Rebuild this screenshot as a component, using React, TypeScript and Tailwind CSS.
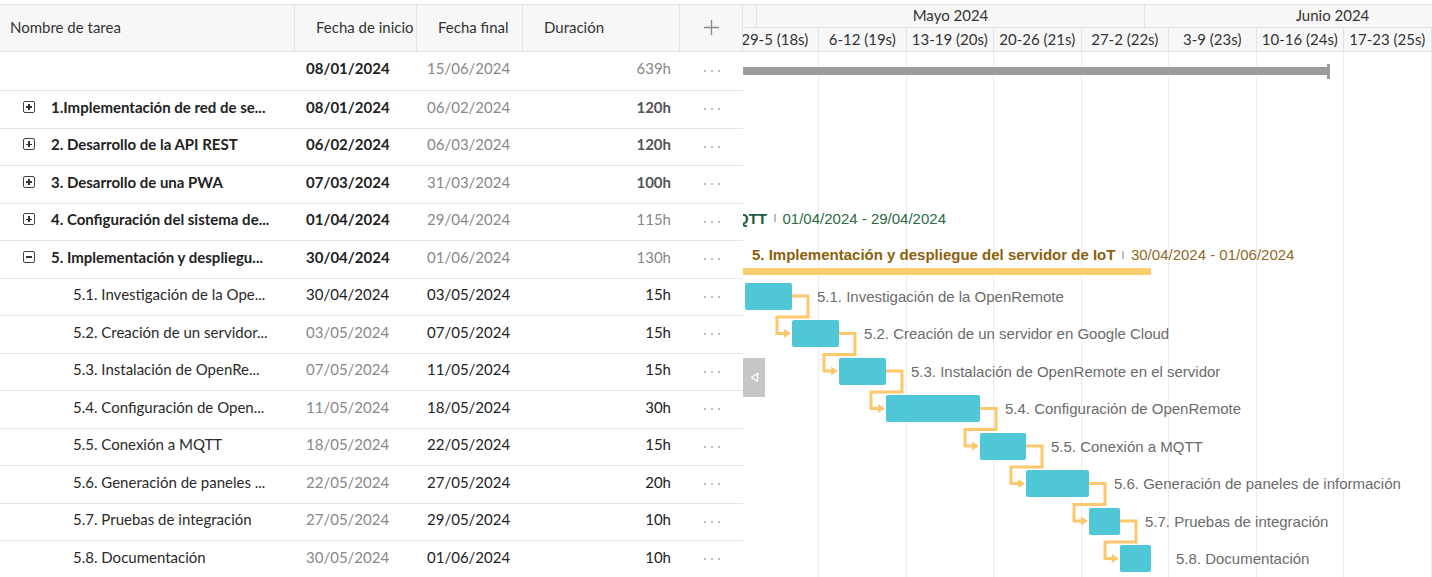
import React from "react";

type GridRow = {
  name: string;
  start: string;
  end: string;
  dur: string;
  level: 0 | 1 | 2;
  icon?: "plus" | "minus";
  startDark?: boolean;
  durBold?: boolean;
};

const gridRows: GridRow[] = [
  { name: "", start: "08/01/2024", end: "15/06/2024", dur: "639h", level: 0 },
  { name: "1.Implementación de red de se...", start: "08/01/2024", end: "06/02/2024", dur: "120h", level: 1, icon: "plus", durBold: true },
  { name: "2. Desarrollo de la API REST", start: "06/02/2024", end: "06/03/2024", dur: "120h", level: 1, icon: "plus", durBold: true },
  { name: "3. Desarrollo de una PWA", start: "07/03/2024", end: "31/03/2024", dur: "100h", level: 1, icon: "plus", durBold: true },
  { name: "4. Configuración del sistema de...", start: "01/04/2024", end: "29/04/2024", dur: "115h", level: 1, icon: "plus" },
  { name: "5. Implementación y despliegu...", start: "30/04/2024", end: "01/06/2024", dur: "130h", level: 1, icon: "minus" },
  { name: "5.1. Investigación de la Ope...", start: "30/04/2024", end: "03/05/2024", dur: "15h", level: 2, startDark: true },
  { name: "5.2. Creación de un servidor...", start: "03/05/2024", end: "07/05/2024", dur: "15h", level: 2 },
  { name: "5.3. Instalación de OpenRe...", start: "07/05/2024", end: "11/05/2024", dur: "15h", level: 2 },
  { name: "5.4. Configuración de Open...", start: "11/05/2024", end: "18/05/2024", dur: "30h", level: 2 },
  { name: "5.5. Conexión a MQTT", start: "18/05/2024", end: "22/05/2024", dur: "15h", level: 2 },
  { name: "5.6. Generación de paneles ...", start: "22/05/2024", end: "27/05/2024", dur: "20h", level: 2 },
  { name: "5.7. Pruebas de integración", start: "27/05/2024", end: "29/05/2024", dur: "10h", level: 2 },
  { name: "5.8. Documentación", start: "30/05/2024", end: "01/06/2024", dur: "10h", level: 2 },
];

// bar positions in px, relative to the left edge of the gantt pane
const tasks = [
  { x0: 2, x1: 49, label: "5.1. Investigación de la OpenRemote" },
  { x0: 49, x1: 96, label: "5.2. Creación de un servidor en Google Cloud" },
  { x0: 96, x1: 143, label: "5.3. Instalación de OpenRemote en el servidor" },
  { x0: 143, x1: 237, label: "5.4. Configuración de OpenRemote" },
  { x0: 237, x1: 283, label: "5.5. Conexión a MQTT" },
  { x0: 283, x1: 346, label: "5.6. Generación de paneles de información" },
  { x0: 346, x1: 377, label: "5.7. Pruebas de integración" },
  { x0: 377, x1: 408, label: "5.8. Documentación" },
];

const weeks = ["29-5 (18s)", "6-12 (19s)", "13-19 (20s)", "20-26 (21s)", "27-2 (22s)", "3-9 (23s)", "10-16 (24s)", "17-23 (25s)"];

const ROW_H = 37.5;
const FIRST_H = 39;
const rowTop = (i: number) => (i === 0 ? 0 : FIRST_H + (i - 1) * ROW_H);

const Expander = ({ kind }: { kind: "plus" | "minus" }) => (
  <span className="relative mr-[16px] ml-[23px] flex h-[12px] w-[12px] shrink-0 items-center justify-center rounded-[2px] border border-[#444]">
    <span className="h-[1.5px] w-[6px] bg-[#333]" />
    {kind === "plus" && <span className="absolute h-[6px] w-[1.5px] bg-[#333]" />}
  </span>
);

const Dots = () => (
  <div className="flex gap-[5px]">
    <span className="h-[2px] w-[2px] rounded-full bg-[#a8a8a8]" />
    <span className="h-[2px] w-[2px] rounded-full bg-[#a8a8a8]" />
    <span className="h-[2px] w-[2px] rounded-full bg-[#a8a8a8]" />
  </div>
);

const Grid = () => (
  <div className="w-[743px] shrink-0 font-['Lato',sans-serif] text-[15px] text-[#222]">
    <div className="flex h-[47px] border-b border-[#e3e3e3] bg-[#f7f7f7] text-[#333]">
      <div className="flex w-[295px] items-center border-r border-[#e3e3e3] pb-[2px] pl-[10px]">Nombre de tarea</div>
      <div className="flex w-[122px] items-center border-r border-[#e3e3e3] pb-[2px] pl-[21px]">Fecha de inicio</div>
      <div className="flex w-[106px] items-center border-r border-[#e3e3e3] pb-[2px] pl-[21px]">Fecha final</div>
      <div className="flex w-[157px] items-center border-r border-[#e3e3e3] pb-[2px] pl-[21px]">Duración</div>
      <div className="flex w-[63px] items-center justify-center border-r border-[#e3e3e3] pb-[2px]">
        <svg width="17" height="17" viewBox="0 0 17 17">
          <path d="M8.5 1v15M1 8.5h15" stroke="#8a8a8a" strokeWidth="1.3" />
        </svg>
      </div>
    </div>
    {gridRows.map((r, i) => {
      const bold = r.level < 2;
      return (
        <div
          key={i}
          className={`flex items-center border-b border-[#e6e6e6] pb-[5px] ${i === 0 ? "h-[39px]" : "h-[37.5px]"}`}
        >
          <div className={`flex w-[295px] items-center whitespace-nowrap ${bold ? "font-bold" : "pl-[73px] text-[#2a2a2a]"}`}>
            {r.icon && <Expander kind={r.icon} />}
            {r.name}
          </div>
          <div className={`w-[122px] pl-[11px] ${bold ? "font-bold text-[#222]" : r.startDark ? "text-[#222]" : "text-[#888]"}`}>
            {r.start}
          </div>
          <div className={`w-[106px] pl-[10px] ${bold ? "text-[#888]" : "text-[#222]"}`}>{r.end}</div>
          <div
            className={`w-[157px] pr-[9px] text-right ${r.level === 2 ? "text-[#222]" : r.durBold ? "font-bold text-[#555]" : "text-[#888]"}`}
          >
            {r.dur}
          </div>
          <div className="flex w-[63px] justify-center pt-[5px]">
            <Dots />
          </div>
        </div>
      );
    })}
  </div>
);

const Sep = () => <span className="mx-[7px] inline-block h-[8px] w-[1.5px] bg-[#bdbdbd]" />;

const Connectors = () => {
  const parts: React.ReactNode[] = [];
  tasks.forEach((t, k) => {
    if (k === tasks.length - 1) return;
    const n = tasks[k + 1];
    const i = 6 + k;
    const cy = rowTop(i) + ROW_H / 2 - 1.25;
    const ny = rowTop(i + 1) + ROW_H / 2 - 1.25;
    const my = rowTop(i) + ROW_H + 1;
    const rx = t.x1 + 16;
    const lx = n.x0 - 15;
    parts.push(
      <path
        key={`p${k}`}
        d={`M${t.x1} ${cy}H${rx}V${my}H${lx}V${ny}H${n.x0 - 7}`}
        fill="none"
        stroke="#fcc86c"
        strokeWidth="3"
      />,
      <polygon key={`a${k}`} points={`${n.x0 - 8},${ny - 4.5} ${n.x0 - 1},${ny} ${n.x0 - 8},${ny + 4.5}`} fill="#fcc86c" />
    );
  });
  return (
    <svg className="pointer-events-none absolute left-0 top-0" width="689" height="526">
      {parts}
    </svg>
  );
};

const Gantt = () => (
  <div className="relative min-w-0 flex-1 overflow-hidden font-['Lato',sans-serif] text-[15px] text-[#333]">
    <div className="h-[47px] border-b border-[#e3e3e3] bg-[#f7f7f7]">
      <div className="flex h-[23px] border-b border-[#e3e3e3]">
        <div className="w-[14px] shrink-0 border-r border-[#e3e3e3]" />
        <div className="flex w-[388px] shrink-0 items-center justify-center border-r border-[#e3e3e3] pb-[2px]">Mayo 2024</div>
        <div className="flex w-[375px] shrink-0 items-center justify-center pb-[2px]">Junio 2024</div>
      </div>
      <div className="-ml-[11.5px] flex h-[23px]">
        {weeks.map((w) => (
          <div key={w} className="flex w-[87.5px] shrink-0 items-center justify-center whitespace-nowrap border-r border-[#e3e3e3] pb-[1px]">
            {w}
          </div>
        ))}
      </div>
    </div>

    <div className="relative h-[526px]">
      <div className="absolute inset-0 -ml-[11.5px] flex">
        {weeks.map((w) => (
          <div key={w} className="h-full w-[87.5px] shrink-0 border-r border-[#ececec]" />
        ))}
      </div>

      <div className="relative font-['Liberation_Sans',Arial,sans-serif] text-[15px]">
        <div className="flex h-[39px] items-start">
          <div className="mt-[15px] h-[8px] w-[584px] bg-[#9c9c9c]" />
          <div className="mt-[12px] h-[15px] w-[3px] bg-[#9c9c9c]" />
        </div>
        <div className="h-[37.5px]" />
        <div className="h-[37.5px]" />
        <div className="h-[37.5px]" />
        <div className="flex h-[37.5px] items-start">
          <div className="mt-[4px] flex h-[21px] items-center whitespace-nowrap leading-[21px]">
            <div className="-ml-[16px] flex w-[40px] justify-end font-bold text-[#1d5a39]">MQTT</div>
            <Sep />
            <span className="text-[#2e6a45]">01/04/2024 - 29/04/2024</span>
          </div>
        </div>
        <div className="flex h-[37.5px] flex-col">
          <div className="mt-[3px] flex h-[21px] items-center whitespace-nowrap pl-[9px] leading-[21px]">
            <span className="font-bold text-[#8d5f0c]">5. Implementación y despliegue del servidor de IoT</span>
            <Sep />
            <span className="text-[#8f6a26]">30/04/2024 - 01/06/2024</span>
          </div>
          <div className="mt-[3px] h-[7px] w-[408px] bg-[#fbcd6e]" />
        </div>
        {tasks.map((t) => (
          <div key={t.label} className="flex h-[37.5px] items-center whitespace-nowrap">
            <div
              className="mb-[2.5px] h-[27px] shrink-0 rounded-[2px] bg-[#50c7d6]"
              style={{ marginLeft: t.x0, width: t.x1 - t.x0 }}
            />
            <span className="mb-[1px] ml-[25px] text-[#6b6b6b]">{t.label}</span>
          </div>
        ))}
      </div>

      <Connectors />

      <div className="absolute left-0 top-[306px] flex h-[39px] w-[22px] items-center justify-center bg-[#c6c6c6]">
        <svg width="9" height="11" viewBox="0 0 9 11">
          <polygon points="7.5,1.5 1.5,5.5 7.5,9.5" fill="none" stroke="#fff" strokeWidth="1.4" strokeLinejoin="round" />
        </svg>
      </div>
    </div>
  </div>
);

export default function App() {
  return (
    <div className="h-[577px] w-[1432px] overflow-hidden bg-white pt-[4px]">
      <div className="flex border-t border-[#e3e3e3]">
        <Grid />
        <Gantt />
      </div>
    </div>
  );
}
